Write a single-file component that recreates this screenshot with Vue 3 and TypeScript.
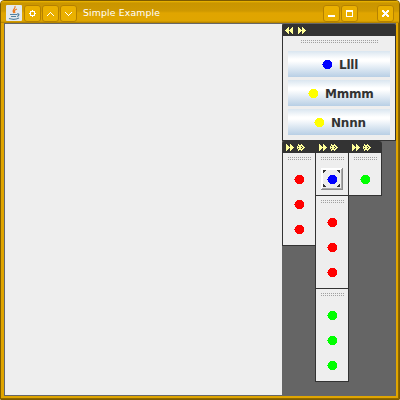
<script setup lang="ts">
interface Action { label: string; color: string; inset: number }
interface Group { color: string; count: number; selected?: boolean }

const actions: Action[] = [
  { label: 'Llll', color: '#0000ff', inset: 34 },
  { label: 'Mmmm', color: '#ffff00', inset: 20 },
  { label: 'Nnnn', color: '#ffff00', inset: 26 },
]
const columns: Group[][] = [
  [{ color: '#ff0000', count: 3 }],
  [
    { color: '#0000ff', count: 1, selected: true },
    { color: '#ff0000', count: 3 },
    { color: '#00ff00', count: 3 },
  ],
  [{ color: '#00ff00', count: 1 }],
]
const dot = 'M3 0H8V1H9V2H10V7H9V8H8V9H3V8H2V7H1V5H0V4H1V2H2V1H3Z'
const arrows = 'M0 0H1V1H2V2H3V3H4V0H5V1H6V2H7V3H8V4H7V5H6V6H5V7H4V4H3V5H2V6H1V7H0Z'
const crossArrows = 'M1 0H2V1H3V2H4V3H5V4H4V5H3V6H2V7H1V5H2V4H0V3H2V2H1ZM4 0H5V1H6V2H7V3H8V4H7V5H6V6H5V7H4V5H5V4H6V3H5V2H4ZM0 2H1V3H0ZM0 4H1V5H0ZM3 1H4V2H3ZM3 5H4V6H3Z'
</script>

<template>
  <div class="window">
    <header class="titlebar">
      <svg class="java" width="16" height="16" viewBox="0 0 16 16">
        <rect width="16" height="16" rx="1" fill="#e4e9ed" />
        <path d="M9 1C10 4 5 5 8 8M11 4C8 5 8 6 9 8" fill="none" stroke="#ee7a20" stroke-width="1.2" />
        <path d="M4 9.5H11M5 11.5H10M3 13.5C6 14.5 10 14.5 13 13M11 9C14 8.5 13 11 11 11.5" fill="none" stroke="#5482a1" stroke-width="1.2" />
      </svg>
      <span class="tb"><svg width="7" height="7"><path d="M3 0H4V1H6V3H7V4H6V6H4V7H3V6H1V4H0V3H1V1H3ZM2 2V5H5V2Z" fill="#fff" fill-rule="evenodd" /></svg></span>
      <span class="tb"><svg width="7" height="7"><path d="M3 2H4V3H5V4H6V5H5V4H4V3H3V4H2V5H1V4H2V3H3ZM0 5H1V6H0ZM6 5H7V6H6Z" fill="#fff" /></svg></span>
      <span class="tb"><svg width="7" height="7"><path d="M0 2H1V3H0ZM6 2H7V3H6ZM1 3H2V4H3V5H4V4H5V3H6V4H5V5H4V6H3V5H2V4H1Z" fill="#fff" /></svg></span>
      <span class="title">Simple Example</span>
      <span class="tb"><svg width="7" height="7"><path d="M0 5H7V7H0Z" fill="#fff" /></svg></span>
      <span class="tb"><svg width="7" height="7"><path d="M0 0H7V7H0ZM1 2V6H6V2Z" fill="#fff" fill-rule="evenodd" /></svg></span>
      <span class="tb close"><svg width="7" height="7"><path d="M0 0H2V1H3V2H4V1H5V0H7V2H6V3H5V4H6V5H7V7H5V6H4V5H3V6H2V7H0V5H1V4H2V3H1V2H0Z" fill="#fff" /></svg></span>
    </header>
    <div class="body">
      <main class="canvas"></main>
      <aside class="side">
        <section class="palette">
          <div class="bar">
            <svg class="flip" width="8" height="7"><path :d="arrows" /></svg>
            <svg width="8" height="7"><path :d="arrows" /></svg>
          </div>
          <div class="palette-body">
            <div class="grip wide"></div>
            <button v-for="a in actions" :key="a.label" class="action" :style="{ paddingLeft: a.inset + 'px' }">
              <svg width="10" height="9"><path :d="dot" :fill="a.color" /></svg>
              <span class="label">{{ a.label }}</span>
            </button>
          </div>
        </section>
        <section class="docks">
          <div class="bar heads">
            <div v-for="(c, i) in columns" :key="i" class="head">
              <svg width="8" height="7"><path :d="arrows" /></svg>
              <svg width="8" height="7"><path :d="crossArrows" /></svg>
            </div>
          </div>
          <div class="columns">
            <div v-for="(c, i) in columns" :key="i" class="column">
              <div v-for="(g, j) in c" :key="j" class="group">
                <div class="grip"></div>
                <div v-for="n in g.count" :key="n" class="cell" :class="{ selected: g.selected }">
                  <svg v-if="g.selected" width="22" height="22">
                    <path d="M0 0H22V22H0Z" fill="#8c8c8c" />
                    <path d="M1 1H21V21H1Z" fill="#aaa" />
                    <path d="M0 0H21V1H20V20H1V21H0Z" fill="#fff" />
                    <path d="M2 2H20V20H2Z" fill="#eee" />
                    <path d="M2 2H5V3H4V4H3V5H2ZM16 2H19V5H18V4H17V3H16ZM2 16H3V17H4V18H5V19H2ZM18 16H19V19H16V18H17V17H18Z" fill="#333" />
                    <path :d="dot" :fill="g.color" transform="translate(6 7)" />
                  </svg>
                  <svg v-else width="10" height="9"><path :d="dot" :fill="g.color" /></svg>
                </div>
              </div>
            </div>
          </div>
        </section>
      </aside>
    </div>
  </div>
</template>

<style>
body { margin: 0; background: #fff; }
</style>
<style scoped>
* { box-sizing: border-box; }
svg { display: block; flex: none; shape-rendering: crispEdges; }
.window {
  width: 400px; height: 400px; padding: 0 3px 3px; overflow: hidden;
  border: 1px solid #7e5b00; border-radius: 4px 4px 1px 1px;
  background: #e0a500; box-shadow: inset -1px -1px #8e6800;
}
.titlebar {
  height: 22px; margin: 0 -3px; padding: 2px 5px 0 5px; display: flex; align-items: center; gap: 1px;
  background: linear-gradient(#f0b800 0, #c99500 2px, #cf9900 10px, #e0a500 12px, #dfa500 20px, #a97b00 22px);
}
.java { shape-rendering: auto; margin-right: 1px; }
.tb {
  width: 17px; height: 17px; flex: none; border: 1px solid #b58100; border-radius: 3px; background: #eab000;
  display: flex; align-items: center; justify-content: center;
}
.title {
  flex: 1; margin-left: 5px; color: #fff; font: 9.3px/16px "DejaVu Sans", sans-serif;
  letter-spacing: .15px; white-space: nowrap;
}
.close { margin-left: 18px; }
.body { display: flex; height: 373px; width: 392px; border: 1px solid #666; border-right: 0; background: #656565; }
.canvas { width: 277px; background: #eee; }
.side { width: 114px; }
.palette { width: 114px; height: 117px; background: #333; border-radius: 3px 3px 0 0; }
.bar { height: 12px; padding: 3px 0 0 3px; display: flex; gap: 5px; align-items: flex-start; background: #333; border-radius: 3px 3px 0 0; }
.bar path { fill: #ffff99; }
.flip { transform: scaleX(-1); }
.palette-body { height: 104px; margin: 0 1px; padding: 4px 5px 0; background: #eee; display: flex; flex-direction: column; gap: 3px; }
.grip {
  width: 24px; height: 3px; margin-left: 5px; flex: none;
  background:
    linear-gradient(#eee, #eee) 0 1px / 100% 1px no-repeat,
    repeating-linear-gradient(90deg, #a0a0a0 0 1px, #eee 1px 2px);
}
.wide { width: 78px; margin: 0 0 5px 13px; }
.action {
  width: 102px; height: 26px; flex: none; margin: 0; padding: 0; border: 0; display: flex; align-items: center; gap: 7px;
  background: linear-gradient(#dae6f0 0, #fff 8px, #fff 10px, #b8cfe5 26px);
  color: #333; font: bold 12px/24px "DejaVu Sans", sans-serif; letter-spacing: -.2px;
}
.label { padding-top: 2px; }
.docks { width: 100px; }
.heads { padding: 3px 0 0; gap: 0; }
.head { width: 33px; padding-left: 4px; display: flex; gap: 3px; }
.columns { display: flex; align-items: flex-start; }
.column { width: 34px; border: solid #333; border-width: 0 1px; margin-right: -1px; background: #eee; flex: none; }
.group { padding: 4px 0 3px; border-bottom: 1px solid #333; }
.group .grip { margin-bottom: 7px; }
.cell { height: 25px; padding: 8px 0 0 11px; }
.cell.selected { padding: 1px 0 0 5px; }
</style>
